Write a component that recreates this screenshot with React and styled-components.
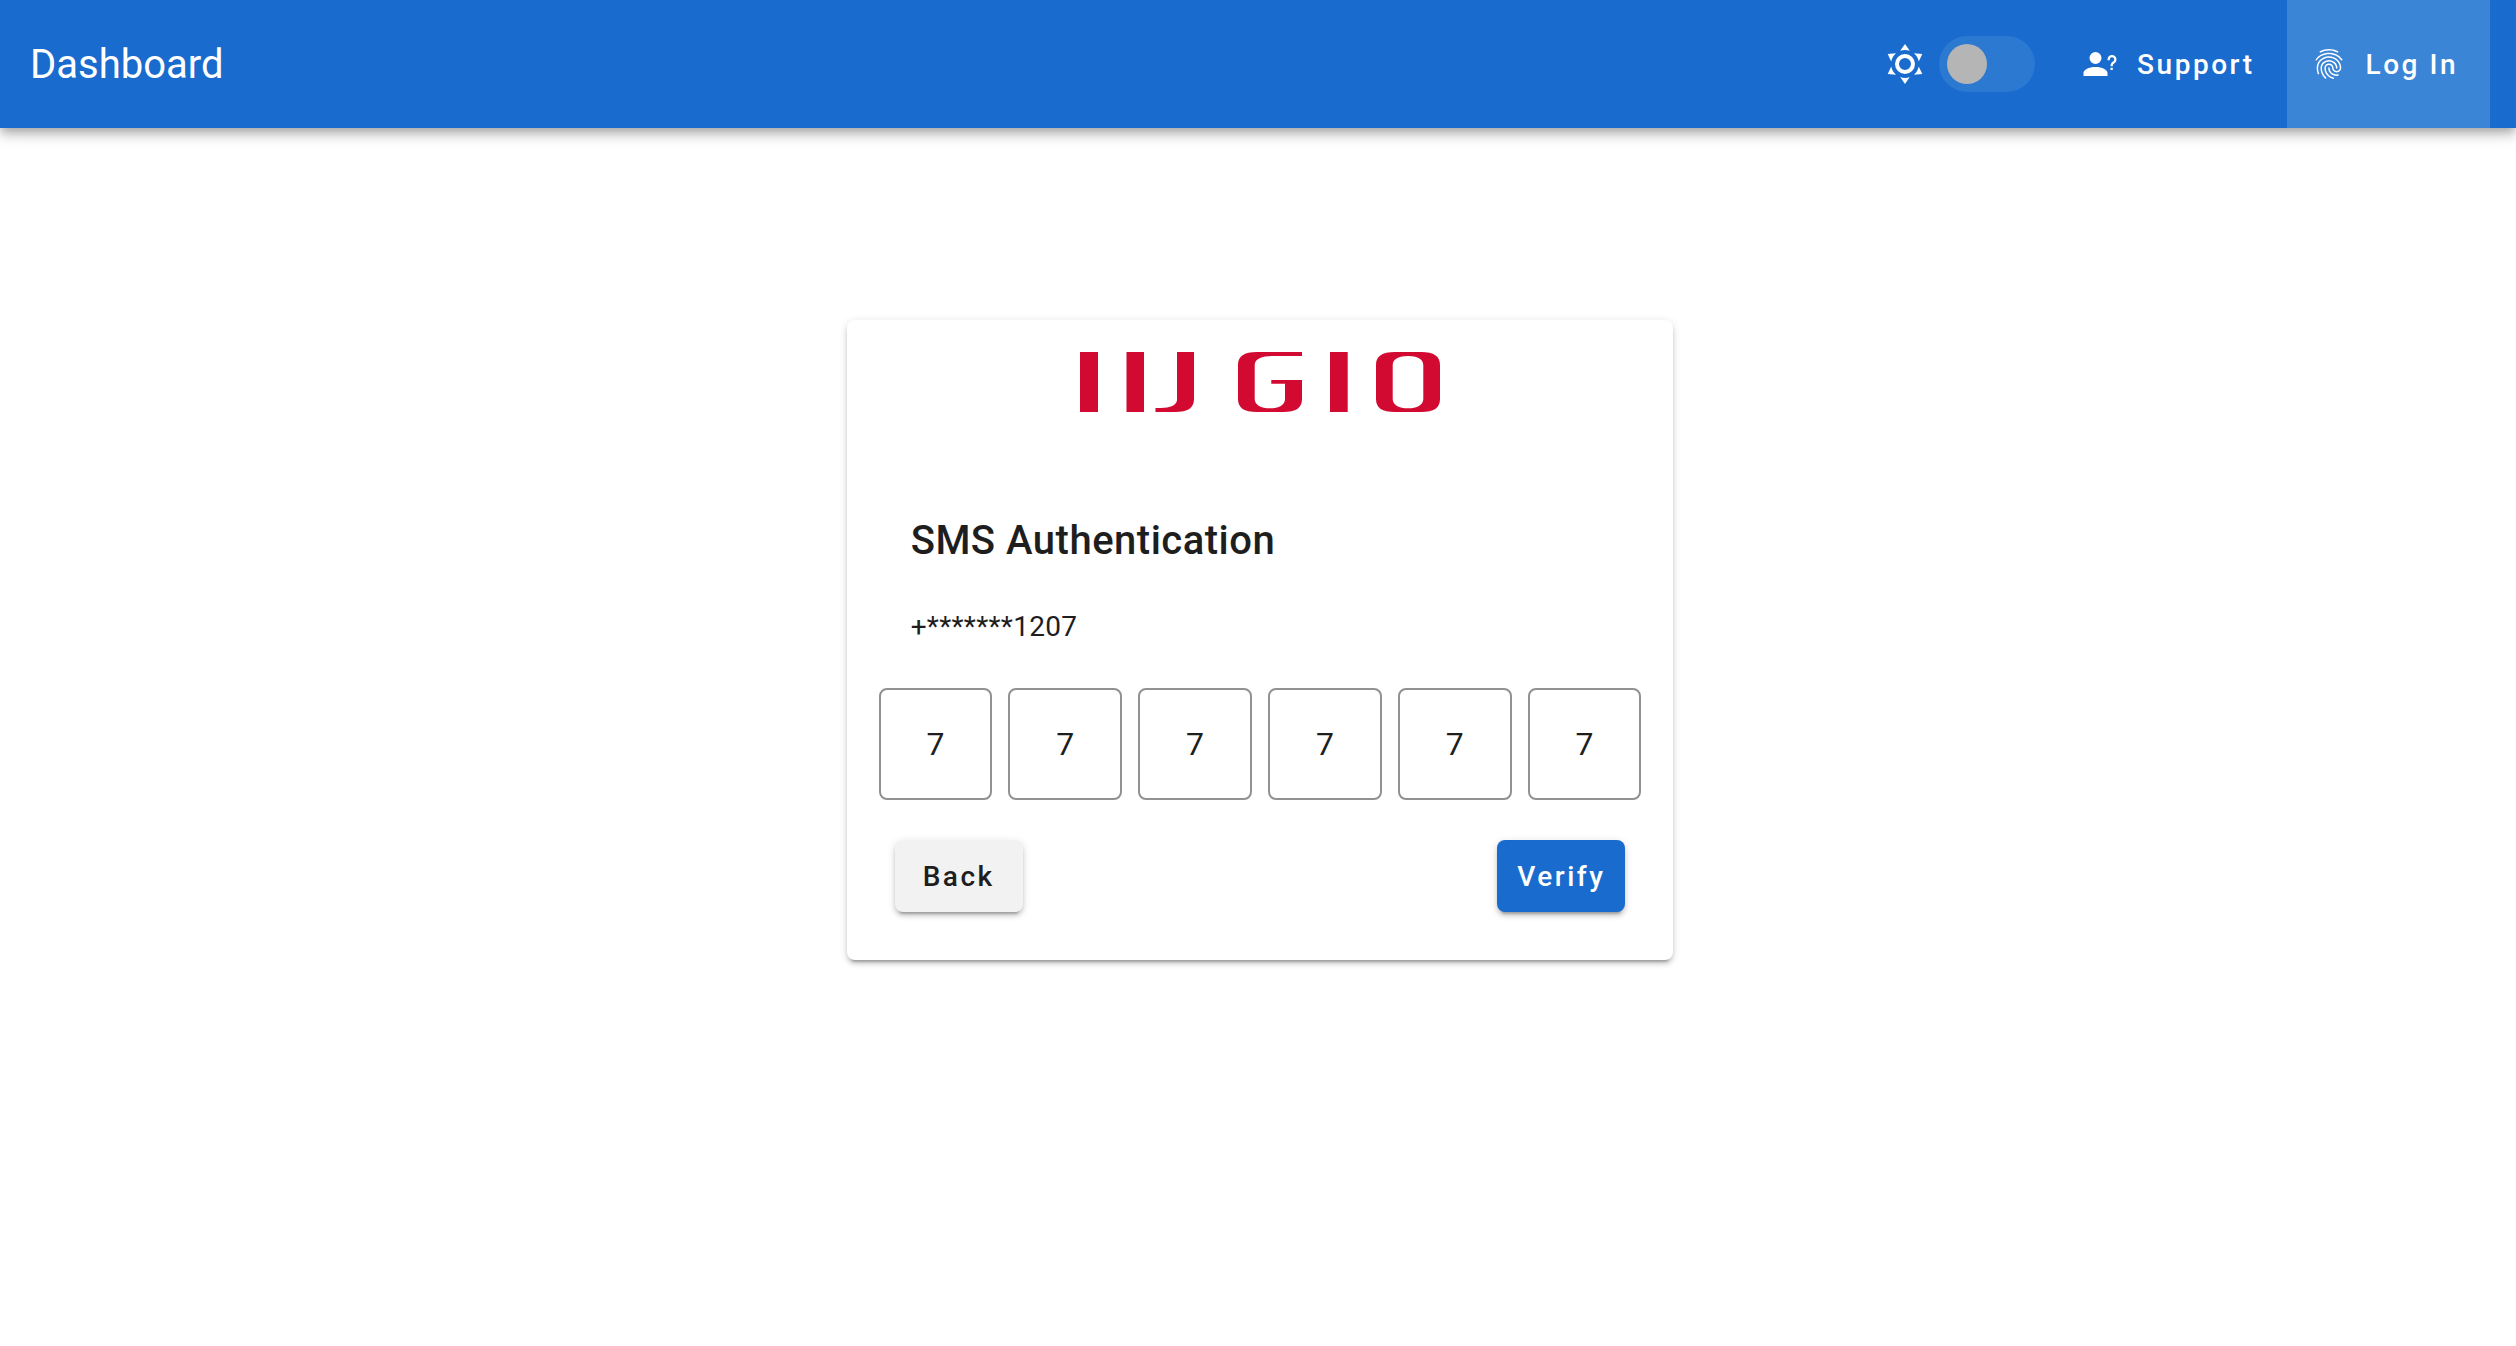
import React, { useState } from 'react'
import styled, { createGlobalStyle } from 'styled-components'
import { MdFingerprint } from 'react-icons/md'

export default function App() {
  const [dark, setDark] = useState(false)
  const [code, setCode] = useState(['7', '7', '7', '7', '7', '7'])

  const changeDigit = (index, value) => {
    setCode(code.map((digit, i) => (i === index ? value.slice(-1) : digit)))
  }

  return (
    <>
      <GlobalStyle />
      <AppBar>
        <Title>Dashboard</Title>
        <ThemeToggle>
          <SunIcon />
          <Switch
            type="checkbox"
            role="switch"
            aria-label="Dark theme"
            checked={dark}
            onChange={(e) => setDark(e.target.checked)}
          />
        </ThemeToggle>
        <nav>
          <NavLink href="#support">
            <AccountQuestionIcon />
            Support
          </NavLink>
          <NavLink href="#login" $active>
            <MdFingerprint />
            Log In
          </NavLink>
        </nav>
      </AppBar>
      <Main>
        <Card onSubmit={(e) => e.preventDefault()}>
          <Logo />
          <Heading>SMS Authentication</Heading>
          <Phone>+*******1207</Phone>
          <Otp>
            {code.map((digit, i) => (
              <Digit
                key={i}
                type="text"
                inputMode="numeric"
                aria-label={`Digit ${i + 1}`}
                value={digit}
                onChange={(e) => changeDigit(i, e.target.value)}
              />
            ))}
          </Otp>
          <Actions>
            <Button type="button">Back</Button>
            <Button type="submit" $primary>Verify</Button>
          </Actions>
        </Card>
      </Main>
    </>
  )
}

function SunIcon() {
  return (
    <svg viewBox="0 0 24 24" aria-hidden="true">
      <path d="M12,7A5,5 0 0,1 17,12A5,5 0 0,1 12,17A5,5 0 0,1 7,12A5,5 0 0,1 12,7M12,9A3,3 0 0,0 9,12A3,3 0 0,0 12,15A3,3 0 0,0 15,12A3,3 0 0,0 12,9M12,2L14.39,5.42C13.65,5.15 12.84,5 12,5C11.16,5 10.35,5.15 9.61,5.42L12,2M3.34,7L7.5,6.65C6.9,7.16 6.36,7.78 5.94,8.5C5.5,9.24 5.25,10 5.11,10.79L3.34,7M3.36,17L5.12,13.23C5.26,14 5.53,14.78 5.95,15.5C6.37,16.24 6.91,16.86 7.5,17.37L3.36,17M20.65,7L18.88,10.79C18.74,10 18.47,9.23 18.05,8.5C17.63,7.78 17.1,7.15 16.5,6.64L20.65,7M20.64,17L16.5,17.36C17.09,16.85 17.62,16.22 18.04,15.5C18.46,14.77 18.73,14 18.87,13.21L20.64,17M12,22L9.59,18.56C10.33,18.83 11.14,19 12,19C12.82,19 13.63,18.83 14.37,18.56L12,22Z" />
    </svg>
  )
}

function AccountQuestionIcon() {
  return (
    <svg viewBox="0 0 24 24" aria-hidden="true">
      <path d="M13,8A4,4 0 0,1 9,12A4,4 0 0,1 5,8A4,4 0 0,1 9,4A4,4 0 0,1 13,8M17,18V20H1V18C1,15.79 4.58,14 9,14C13.42,14 17,15.79 17,18M20.5,14.5V16H19V14.5H20.5M18.5,9.5H17V9A3,3 0 0,1 20,6A3,3 0 0,1 23,9C23,9.97 22.5,10.88 21.71,11.41L21.41,11.6C20.84,12 20.5,12.61 20.5,13.3V13.5H19V13.3C19,12.11 19.6,11 20.59,10.35L20.88,10.16C21.27,9.9 21.5,9.47 21.5,9A1.5,1.5 0 0,0 20,7.5A1.5,1.5 0 0,0 18.5,9V9.5Z" />
    </svg>
  )
}

function Logo() {
  return (
    <LogoSvg viewBox="0 0 360 60" role="img" aria-label="IIJ GIO">
      <rect x="0" y="0" width="18" height="60" />
      <rect x="46.5" y="0" width="17.5" height="60" />
      <path d="M97 0H114V47C114 56 108 60 95 60H75.5V56H81C90 56 97 53 97 48Z" />
      <path d="M222 0V4H192C182 4 174.7 7 174.7 13V47C174.7 53 181 56.3 190 56.3C199 56.3 205 53 205 47V31.7H191.3V28H222V47C222 56 216 60 203 60H177C164 60 158 56 158 47V13C158 4 164 0 177 0Z" />
      <rect x="250" y="0" width="17.7" height="60" />
      <path
        fillRule="evenodd"
        d="M315 0H341C354 0 360 4 360 13V47C360 56 354 60 341 60H315C302 60 296 56 296 47V13C296 4 302 0 315 0ZM328 4C319 4 312.7 7 312.7 13V47C312.7 53 319 56.3 328 56.3C337 56.3 343.3 53 343.3 47V13C343.3 7 337 4 328 4Z"
      />
    </LogoSvg>
  )
}

const GlobalStyle = createGlobalStyle`
  *, *::before {
    box-sizing: border-box;
  }
  body {
    margin: 0;
    min-height: 100vh;
    background: #ffffff;
    color: #1e1e1e;
    font-family: Roboto, sans-serif;
    font-size: 28px;
  }
  h1, h2, p {
    margin: 0;
  }
`;

const AppBar = styled.header`
  display: flex;
  align-items: center;
  height: 128px;
  padding: 0 26px 0 30px;
  background: #196bce;
  color: #ffffff;
  box-shadow: 0 4px 8px -2px rgba(0, 0, 0, 0.2), 0 8px 10px 0 rgba(0, 0, 0, 0.14), 0 2px 20px 0 rgba(0, 0, 0, 0.12);

  nav {
    display: flex;
    align-self: stretch;
  }
`;

const Title = styled.h1`
  flex: 1;
  padding-top: 2px;
  font-size: 40px;
  font-weight: 400;
  line-height: 56px;
`;

const ThemeToggle = styled.label`
  display: flex;
  align-items: center;
  gap: 10px;
  margin-right: 23px;

  svg {
    width: 48px;
    height: 48px;
    fill: currentColor;
  }
`;

const Switch = styled.input`
  appearance: none;
  display: flex;
  align-items: center;
  width: 96px;
  height: 56px;
  margin: 0;
  padding: 0 8px;
  border-radius: 28px;
  background: #2c79d2;
  cursor: pointer;

  &::before {
    content: '';
    width: 40px;
    height: 40px;
    border-radius: 50%;
    background: #b5b5b5;
  }
  &:checked {
    justify-content: flex-end;
  }
`;

const NavLink = styled.a`
  display: flex;
  align-items: center;
  gap: 19px;
  padding: 0 32px 0 24px;
  background: ${({ $active }) => ($active ? '#3a85d6' : 'transparent')};
  color: inherit;
  font-weight: 500;
  letter-spacing: 0.09em;
  text-decoration: none;

  svg {
    width: 36px;
    height: 36px;
    fill: currentColor;
  }
`;

const Main = styled.main`
  width: 33.3333%;
  margin: 0 auto;
  padding: 192px 4px 64px 8px;
`;

const Card = styled.form`
  display: flex;
  flex-direction: column;
  padding: 32px 32px 48px;
  border-radius: 8px;
  background: #ffffff;
  box-shadow: 0 6px 2px -4px rgba(0, 0, 0, 0.2), 0 4px 4px 0 rgba(0, 0, 0, 0.14), 0 2px 10px 0 rgba(0, 0, 0, 0.12);
`;

const LogoSvg = styled.svg`
  align-self: center;
  width: 360px;
  height: 60px;
  fill: #d20a32;
`;

const Heading = styled.h2`
  margin-top: 97px;
  padding: 0 32px;
  font-size: 40px;
  font-weight: 500;
  line-height: 64px;
  letter-spacing: 0.0125em;
`;

const Phone = styled.p`
  margin-top: 34px;
  padding: 0 32px;
  line-height: 40px;
  letter-spacing: 0.01em;
`;

const Otp = styled.div`
  display: grid;
  grid-template-columns: repeat(6, 1fr);
  gap: 16px;
  margin-top: 41px;
`;

const Digit = styled.input`
  width: 100%;
  height: 112px;
  padding: 0;
  border: 2px solid #919191;
  border-radius: 8px;
  background: transparent;
  color: inherit;
  font-family: inherit;
  font-size: 32px;
  text-align: center;
`;

const Actions = styled.div`
  display: flex;
  justify-content: space-between;
  margin-top: 40px;
  padding: 0 16px;
`;

const Button = styled.button`
  min-width: 128px;
  height: 72px;
  padding: 0 16px;
  border: none;
  border-radius: 8px;
  background: ${({ $primary }) => ($primary ? '#196bce' : '#f2f2f2')};
  color: ${({ $primary }) => ($primary ? '#ffffff' : 'inherit')};
  font-family: inherit;
  font-size: 28px;
  font-weight: 500;
  letter-spacing: 0.09em;
  box-shadow: 0 6px 2px -4px rgba(0, 0, 0, 0.2), 0 4px 4px 0 rgba(0, 0, 0, 0.14), 0 2px 10px 0 rgba(0, 0, 0, 0.12);
  cursor: pointer;
`;
